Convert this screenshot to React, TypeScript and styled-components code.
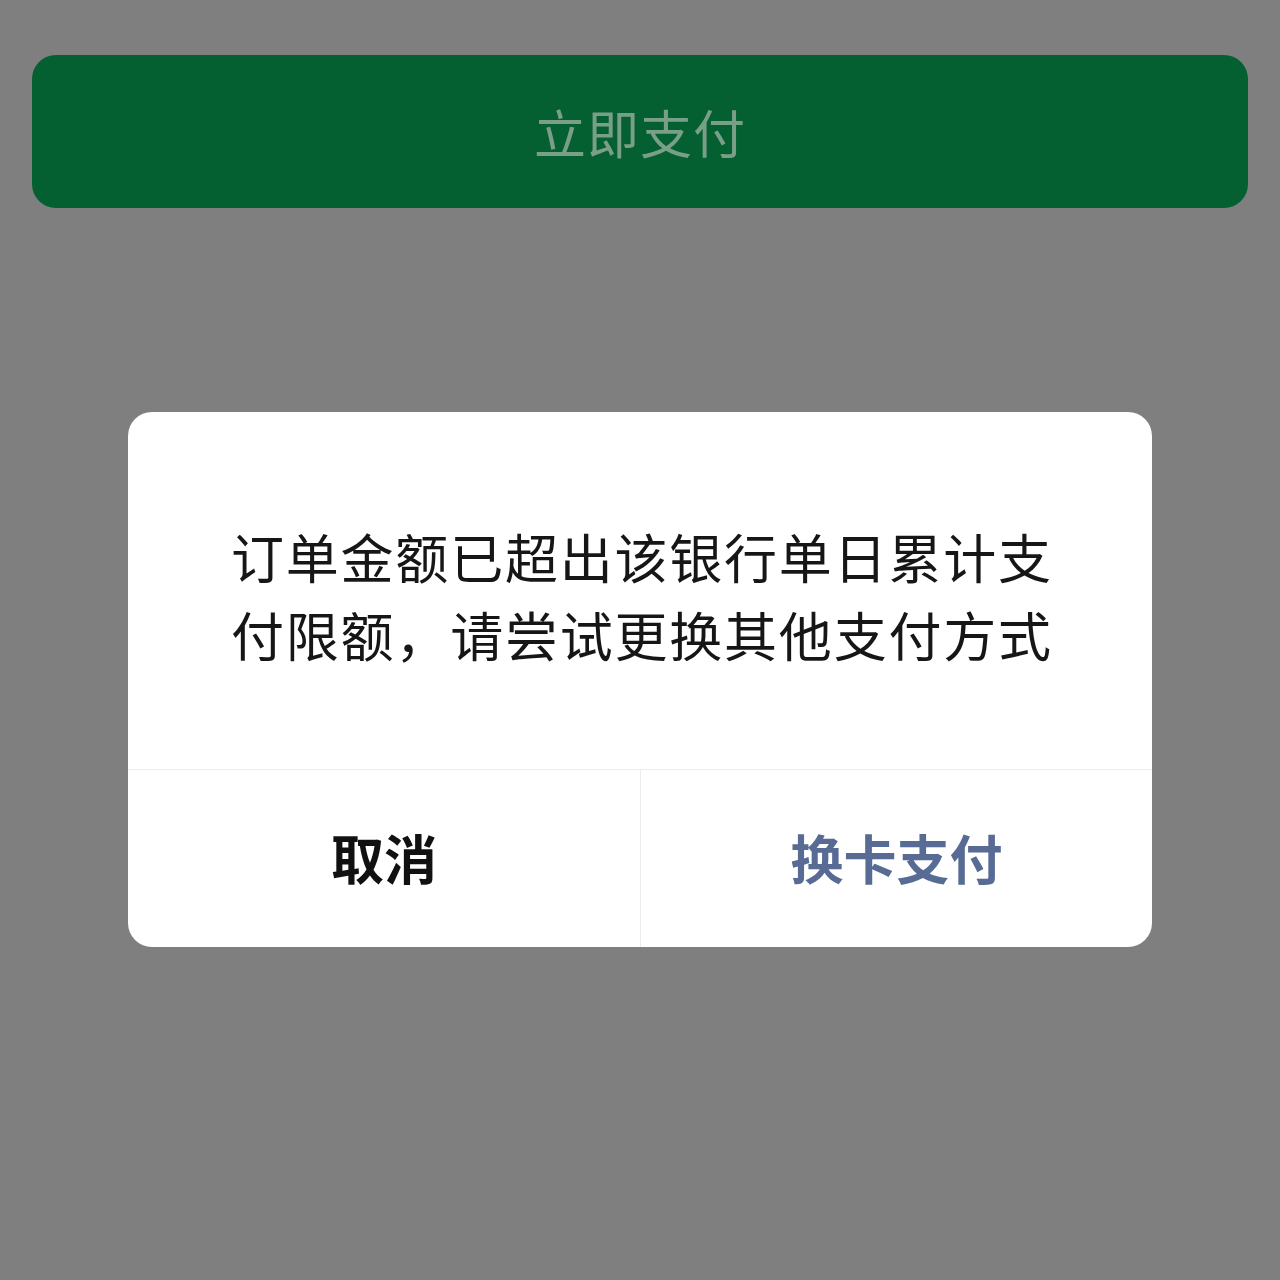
import styled, { createGlobalStyle } from "styled-components";

const GlobalStyle = createGlobalStyle`
  html, body {
    margin: 0;
    padding: 0;
    background: #7f7f7f;
  }
  body {
    font-family: "Noto Sans CJK SC", "Noto Sans", sans-serif;
  }
`;

const Page = styled.div`
  min-height: 1280px;
  box-sizing: border-box;
  padding: 55px 32px 0;
  display: flex;
  flex-direction: column;
  align-items: center;
`;

const PayButton = styled.div`
  width: 100%;
  height: 153px;
  border-radius: 24px;
  background: #045f31;
  color: #7a9f88;
  font-size: 52px;
  display: flex;
  align-items: center;
  justify-content: center;
  letter-spacing: 1px;
`;

const Dialog = styled.div`
  margin-top: 204px;
  width: 1024px;
  background: #ffffff;
  border-radius: 24px;
  overflow: hidden;
  display: flex;
  flex-direction: column;
`;

const Body = styled.div`
  padding: 105px 0 96px;
  display: flex;
  flex-direction: column;
  align-items: center;
  border-bottom: 1px solid #ececec;
`;

const Line = styled.div`
  width: 818px;
  white-space: nowrap;
  font-size: 53px;
  letter-spacing: -2px;
  line-height: 78px;
  color: #161616;
  text-align: justify;
  text-align-last: justify;
`;

const Footer = styled.div`
  display: grid;
  grid-template-columns: 1fr 1fr;
  height: 177px;
`;

const Action = styled.button<{ $primary?: boolean }>`
  border: none;
  background: transparent;
  padding: 0 0 4px;
  font-family: inherit;
  font-size: 53px;
  font-weight: 700;
  color: ${(p) => (p.$primary ? "#576b95" : "#111111")};
  & + & {
    border-left: 1px solid #ececec;
  }
`;

export default function App() {
  return (
    <>
      <GlobalStyle />
      <Page>
        <PayButton>立即支付</PayButton>
        <Dialog>
          <Body>
            <Line>订单金额已超出该银行单日累计支</Line>
            <Line>付限额，请尝试更换其他支付方式</Line>
          </Body>
          <Footer>
            <Action>取消</Action>
            <Action $primary>换卡支付</Action>
          </Footer>
        </Dialog>
      </Page>
    </>
  );
}
